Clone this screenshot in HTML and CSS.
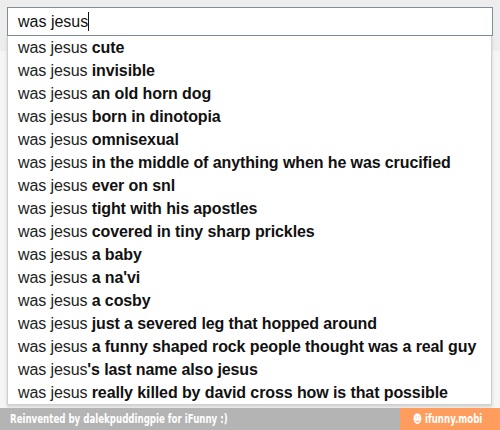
FILE: index.html
```html
<!DOCTYPE html>
<html lang="en">
<head>
    <meta charset="UTF-8">
    <title>was jesus</title>
    <link rel="stylesheet" href="styles.css">
</head>
<body>

<div class="page">
    <!-- Campo de busca -->
    <div class="search">was jesus<span class="caret"></span></div>

    <!-- Sugestões -->
    <ul class="suggestions">
        <li>was jesus <b>cute</b></li>
        <li>was jesus <b>invisible</b></li>
        <li>was jesus <b>an old horn dog</b></li>
        <li>was jesus <b>born in dinotopia</b></li>
        <li>was jesus <b>omnisexual</b></li>
        <li>was jesus <b>in the middle of anything when he was crucified</b></li>
        <li>was jesus <b>ever on snl</b></li>
        <li>was jesus <b>tight with his apostles</b></li>
        <li>was jesus <b>covered in tiny sharp prickles</b></li>
        <li>was jesus <b>a baby</b></li>
        <li>was jesus <b>a na'vi</b></li>
        <li>was jesus <b>a cosby</b></li>
        <li>was jesus <b>just a severed leg that hopped around</b></li>
        <li>was jesus <b>a funny shaped rock people thought was a real guy</b></li>
        <li>was jesus<b>'s last name also jesus</b></li>
        <li>was jesus <b>really killed by david cross how is that possible</b></li>
    </ul>
</div>

<!-- Rodapé -->
<div class="footer">
    <div class="credit"><span>Reinvented by dalekpuddingpie for iFunny :)</span></div>
    <div class="brand"><span>&#9787; ifunny.mobi</span></div>
</div>

</body>
</html>
```

FILE: styles.css
```css
body {
    margin: 0;
    font-family: 'Liberation Sans', Arial, sans-serif;
    color: #222;
    background: #f4f4f4;
}

.page {
    background: linear-gradient(#ededed 0, #ededed 51px, #f5f5f5 51px);
    padding: 7px 7px 0;
    height: 401px;
}

.search {
    height: 27px;
    line-height: 27px;
    border: 1px solid #7d8d9a;
    background: white;
    padding-left: 10px;
    font-size: 16px;
    color: #111;
}

.caret {
    display: inline-block;
    width: 1px;
    height: 19px;
    background: #111;
    vertical-align: -4px;
}

.suggestions {
    list-style: none;
    margin: 0 1px 0 0;
    padding: 0;
    background: white;
    border: 1px solid #cfcfcf;
    border-top: none;
    box-shadow: 0 2px 3px rgba(0, 0, 0, 0.15);
}

.suggestions li {
    height: 23px;
    line-height: 23px;
    padding-left: 10px;
    font-size: 16px;
    letter-spacing: -0.1px;
    color: #222;
    white-space: nowrap;
}

.suggestions b {
    color: #111;
}

.footer {
    display: flex;
    height: 22px;
    background: #b4b4b4;
    color: white;
    font-family: 'DejaVu Sans Condensed', 'DejaVu Sans', sans-serif;
    font-weight: bold;
    font-size: 12px;
    line-height: 22px;
    white-space: nowrap;
}

.footer span {
    display: inline-block;
    transform: scaleX(0.8);
    transform-origin: left center;
}

.credit {
    flex: 1;
    padding-left: 10px;
}

.brand {
    width: 87px;
    padding-left: 13px;
    background: #ff9d5e;
}
```
